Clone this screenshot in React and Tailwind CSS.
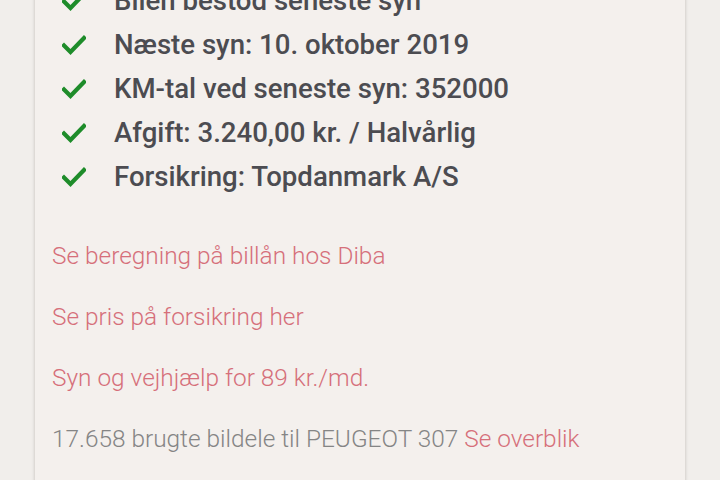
import React from "react";

const checks = [
	"Bilen bestod seneste syn",
	"Næste syn: 10. oktober 2019",
	"KM-tal ved seneste syn: 352000",
	"Afgift: 3.240,00 kr. / Halvårlig",
	"Forsikring: Topdanmark A/S",
];

const links = [
	"Se beregning på billån hos Diba",
	"Se pris på forsikring her",
	"Syn og vejhjælp for 89 kr./md.",
];

function Check() {
	return (
		<svg width="24" height="20" viewBox="0 0 24 20" className="shrink-0">
			<path
				d="M2 10.5 L8.5 17 L22 3"
				fill="none"
				stroke="#1e8c2a"
				strokeWidth="4.2"
				strokeLinecap="square"
			/>
		</svg>
	);
}

export default function App() {
	return (
		<div
			className="w-[720px] h-[480px] overflow-hidden bg-[#f1eeeb]"
			style={{ fontFamily: "Roboto, 'Liberation Sans', sans-serif" }}>
			<div className="ml-[34px] w-[652px] -mt-[22px] bg-[#f4f0ed] border border-[#dedad6] rounded-sm shadow-[0_1px_3px_rgba(0,0,0,0.12)] pb-[20px]">
				<ul className="pl-[27px]">
					{checks.map((c) => (
						<li
							key={c}
							className="h-[44px] flex items-center gap-[28px] text-[27.6px] font-medium text-[#4c4c51]">
							<Check />
							<span>{c}</span>
						</li>
					))}
				</ul>
				<div className="pl-[17px] mt-[27px] flex flex-col text-[24.4px] font-light">
					{links.map((l) => (
						<div key={l} className="h-[61px] flex items-center text-[#d66f7a]">
							{l}
						</div>
					))}
					<div className="h-[60px] flex items-center text-[#858585]">
						17.658 brugte bildele til PEUGEOT 307&nbsp;
						<span className="text-[#d66f7a]">Se overblik</span>
					</div>
				</div>
			</div>
		</div>
	);
}
